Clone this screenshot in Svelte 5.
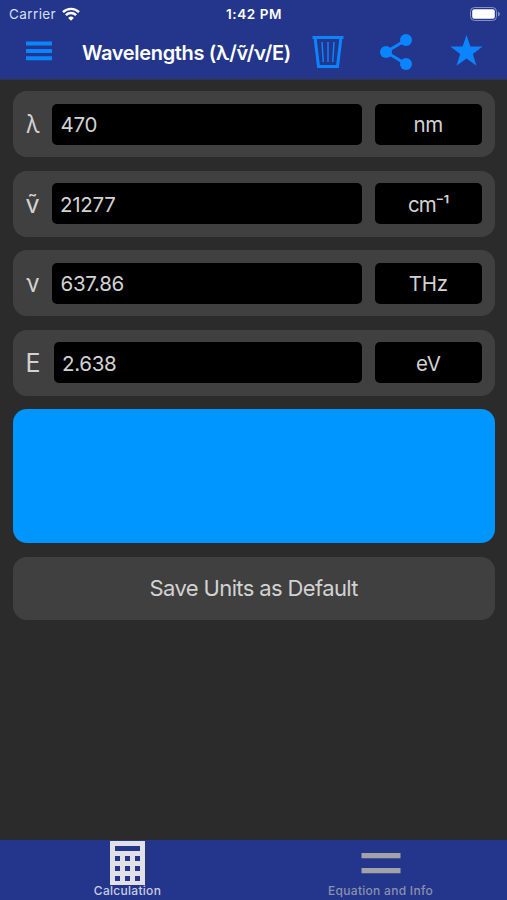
<script lang="ts">
	type Quantity = {
		id: string;
		symbol: string;
		value: string;
		unit: string;
		labelWidth: number;
	};

	let quantities = $state<Quantity[]>([
		{ id: "wavelength", symbol: "λ", value: "470", unit: "nm", labelWidth: 26.5 },
		{ id: "wavenumber", symbol: "ṽ", value: "21277", unit: "cm⁻¹", labelWidth: 26 },
		{ id: "frequency", symbol: "ν", value: "637.86", unit: "THz", labelWidth: 26.5 },
		{ id: "energy", symbol: "E", value: "2.638", unit: "eV", labelWidth: 28 }
	]);

	let activeTab = $state("calculation");

	const keyRows = [15, 25, 35];
	const keyColumns = [5, 15, 25];
</script>

<div class="screen">
	<header>
		<div class="status">
			<span class="carrier">
				Carrier
				<svg class="wifi" width="18" height="14" viewBox="0 0 18 14" aria-hidden="true">
					<path d="M1 5.2a11.3 11.3 0 0 1 16 0" />
					<path d="M3.9 8.1a7.2 7.2 0 0 1 10.2 0" />
					<path class="dot" d="M9 13.7 6.2 10.9a4 4 0 0 1 5.6 0z" />
				</svg>
			</span>
			<span class="time">1:42 PM</span>
			<svg class="battery" width="31" height="14" viewBox="0 0 31 14" aria-hidden="true">
				<rect class="shell" x="0.5" y="0.5" width="26" height="13" rx="4" />
				<rect class="charge" x="2.2" y="2.2" width="22.6" height="9.6" rx="2" />
				<path class="cap" d="M28 4.5c2.4.8 2.4 4.2 0 5z" />
			</svg>
		</div>

		<nav class="toolbar">
			<button class="menu" aria-label="Menu">
				<svg width="26" height="20" viewBox="0 0 26 20">
					<path d="M0 .5h26v4H0zM0 8h26v4H0zM0 15.3h26v4H0z" />
				</svg>
			</button>
			<h1>Wavelengths (λ/ṽ/ν/E)</h1>
			<button class="trash" aria-label="Clear">
				<svg width="32" height="34" viewBox="0 0 32 34">
					<path class="line" d="M.5 2.5h31" />
					<path class="line" d="M3 2.5 6.5 31.5h19L29 2.5" />
					<path class="rib" d="M10 7 11.3 27M16 7v20M22 7 20.7 27" />
				</svg>
			</button>
			<button class="share" aria-label="Share">
				<svg width="34" height="36" viewBox="0 0 34 36">
					<path class="line" d="M27 6 7 18l20 12" />
					<circle cx="7" cy="18" r="6" />
					<circle cx="27" cy="6" r="6" />
					<circle cx="27" cy="30" r="6" />
				</svg>
			</button>
			<button class="star" aria-label="Favourite">
				<svg width="33" height="32" viewBox="0 0 33 32">
					<path d="M16.5 0l3.9 11.6h12.3l-9.9 7.3 3.7 11.8-10-7.2-10 7.2 3.7-11.8L.3 11.6h12.3z" />
				</svg>
			</button>
		</nav>
	</header>

	<main>
		{#each quantities as quantity (quantity.id)}
			<div class="card {quantity.id}">
				<label for={quantity.id} style:width="{quantity.labelWidth}px">
					<span>{quantity.symbol}</span>
				</label>
				<input id={quantity.id} bind:value={quantity.value} inputmode="decimal" />
				<button class="unit">{quantity.unit}</button>
			</div>
		{/each}

		<div class="swatch"></div>

		<button class="save"><span>Save Units as Default</span></button>
	</main>

	<footer>
		<button
			class="tab"
			class:active={activeTab === "calculation"}
			onclick={() => (activeTab = "calculation")}
		>
			<svg width="35" height="44" viewBox="0 0 35 44" aria-hidden="true">
				<rect width="35" height="44" />
				<rect class="hole" x="5" y="5" width="25" height="5" />
				{#each keyRows as y}
					{#each keyColumns as x}
						<rect class="hole" {x} {y} width="5" height="5" />
					{/each}
				{/each}
			</svg>
			<span>Calculation</span>
		</button>
		<button
			class="tab info"
			class:active={activeTab === "info"}
			onclick={() => (activeTab = "info")}
		>
			<svg width="40" height="44" viewBox="0 0 40 44" aria-hidden="true">
				<path d="M.5 12h39v5.3H.5zM.5 27h39v5.3H.5z" />
			</svg>
			<span>Equation and Info</span>
		</button>
	</footer>
</div>

<style>
	:global(body) {
		background: #2b2b2b;
	}

	.screen {
		display: flex;
		flex-direction: column;
		height: 100vh;
		background: #2b2b2b;
		color: #d2d2d2;
		font-family: Inter, "Liberation Sans", sans-serif;
		overflow: hidden;
	}

	button {
		margin: 0;
		padding: 0;
		border: 0;
		background: none;
		color: inherit;
		font: inherit;
	}

	svg {
		display: block;
		flex: none;
	}

	header {
		height: 80px;
		flex: none;
		border-bottom: 1px solid #303447;
		box-sizing: border-box;
		background: #24368b;
	}

	.status {
		display: grid;
		grid-template-columns: 1fr auto 1fr;
		align-items: center;
		height: 27px;
		padding: 0 6px 0 9px;
		color: #fff;
		font-size: 13.5px;
	}

	.carrier {
		display: flex;
		align-items: center;
		gap: 6px;
		color: #d9def5;
		letter-spacing: 0.4px;
	}

	.wifi {
		fill: none;
		stroke: #fff;
		stroke-width: 2.4;
	}

	.wifi .dot {
		fill: #fff;
		stroke: none;
	}

	.time {
		margin-right: 2px;
		font-size: 13.5px;
		font-weight: 600;
		letter-spacing: 0.55px;
	}

	.battery {
		justify-self: end;
	}

	.shell {
		fill: none;
		stroke: #8790c3;
	}

	.charge {
		fill: #fff;
	}

	.cap {
		fill: #8790c3;
	}

	.toolbar {
		display: flex;
		align-items: center;
		height: 50px;
		padding: 0 25px 0 26px;
		fill: #0a84ff;
	}

	.menu {
		margin-bottom: 3px;
	}

	h1 {
		width: 208px;
		margin: 0 22px 0 30px;
		padding-top: 1px;
		color: #fff;
		font-size: 20px;
		font-weight: 600;
		line-height: 50px;
		letter-spacing: -0.33px;
		white-space: nowrap;
	}

	.line {
		fill: none;
		stroke: #0a84ff;
		stroke-width: 3;
	}

	.rib {
		fill: none;
		stroke: #0a84ff;
		stroke-width: 1.5;
	}

	.share {
		margin-left: 35px;
	}

	.star {
		margin: 0 0 2px 36.5px;
	}

	main {
		display: flex;
		flex: 1;
		flex-direction: column;
		gap: 13.4px;
		padding: 11.4px 12.5px 0 13px;
	}

	.card {
		display: flex;
		align-items: center;
		height: 66px;
		padding: 0 12.5px;
		border-radius: 14px;
		box-sizing: border-box;
		background: #404040;
	}

	label {
		flex: none;
		font-size: 25px;
		line-height: 40px;
	}

	label span {
		display: block;
		width: max-content;
		transform-origin: left center;
	}

	.wavelength label span {
		transform: scaleX(0.86);
	}

	.frequency label span {
		transform: scaleX(0.92);
	}

	input {
		flex: 1;
		min-width: 0;
		height: 41px;
		margin: 0 12.5px 0 0;
		padding: 1px 8.5px 0;
		border: 0;
		border-radius: 5px;
		box-sizing: border-box;
		background: #000;
		color: #d2d2d2;
		font: 20.5px Inter, "Liberation Sans", sans-serif;
		letter-spacing: -0.3px;
	}

	.unit {
		width: 107.5px;
		height: 41px;
		flex: none;
		padding-top: 1px;
		border-radius: 5px;
		background: #000;
		font-size: 20.5px;
		letter-spacing: -0.3px;
	}

	.wavenumber .unit {
		letter-spacing: -1.1px;
	}

	.swatch {
		height: 134.5px;
		border-radius: 14px;
		background: #0096ff;
	}

	.save {
		height: 63px;
		border-radius: 14px;
		background: #404040;
		font-size: 22px;
		letter-spacing: -0.62px;
	}

	footer {
		display: flex;
		height: 60px;
		flex: none;
		background: #24368b;
	}

	.tab {
		display: flex;
		flex: 1;
		flex-direction: column;
		align-items: center;
		padding-top: 1px;
		color: #8b90ae;
		fill: #a2a2a8;
		font-size: 12px;
		font-weight: 500;
		line-height: 12px;
		letter-spacing: 0.28px;
	}

	.tab.active {
		padding-left: 1px;
		color: #c9cde4;
		fill: #e0e0e6;
	}

	.hole {
		fill: #24368b;
	}
</style>
